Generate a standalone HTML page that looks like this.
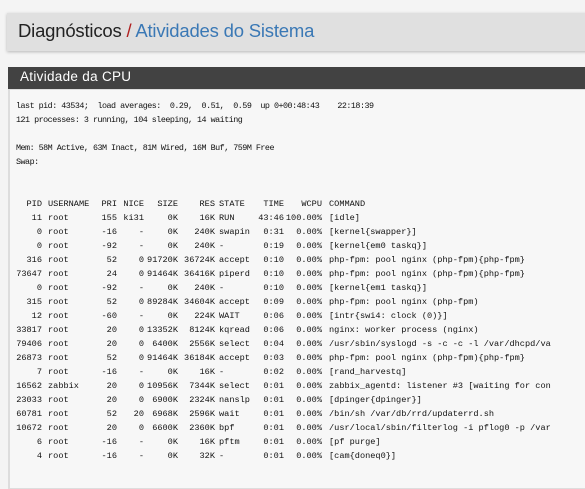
<!DOCTYPE html>
<html><head><meta charset="utf-8">
<style>
*{margin:0;padding:0;box-sizing:border-box}
body{width:585px;height:480px;overflow:hidden;background:#f4f4f4;font-family:"Liberation Sans",sans-serif;position:relative}
.hdr{position:absolute;left:7px;top:13px;width:590px;height:38px;background:#e0e0e0;box-shadow:0 1px 3px rgba(0,0,0,.25)}
.hdr h1{position:absolute;left:11px;top:7px;font-weight:normal;font-size:18.5px;color:#222;letter-spacing:-0.2px;white-space:nowrap}
.hdr .sl{color:#b02020}
.hdr .bl{color:#3a78b5}
.ph{position:absolute;left:8px;top:67px;width:590px;height:22px;background:#424242;color:#fff;font-size:13.5px;padding:2px 0 0 12px;letter-spacing:0.3px}
.pb{position:absolute;left:8px;top:89px;width:590px;height:400px;background:#f7f7f7;border:1px solid #ddd;border-left:2px solid #ddd}
.t{position:absolute;font-family:"Liberation Mono",monospace;font-size:8.4px;color:#111;white-space:pre;line-height:14px;letter-spacing:-0.5px}
.r{position:absolute;left:0;width:585px;height:14px;font-family:"Liberation Mono",monospace;font-size:8.6px;color:#111;white-space:pre;line-height:14px}
.r span{position:absolute;top:0}
.a{right:543px}.b{left:48px}.c{right:468px}.d{right:441px}.e{right:407px}.f{right:370px}.g{left:219px}.h{right:301px}.i{right:263px}.j{left:329px}
</style></head><body>
<div class="hdr"><h1>Diagnósticos <span class="sl">/</span> <span class="bl">Atividades do Sistema</span></h1></div>
<div class="ph">Atividade da CPU</div>
<div class="pb"></div>
<div class="t" style="left:16px;top:99px">last pid: 43534;  load averages:  0.29,  0.51,  0.59  up 0+00:48:43    22:18:39
121 processes: 3 running, 104 sleeping, 14 waiting

Mem: 58M Active, 63M Inact, 81M Wired, 16M Buf, 759M Free
Swap:</div>
<div class="r" style="top:197px"><span class="a">PID</span><span class="b">USERNAME</span><span class="c">PRI</span><span class="d">NICE</span><span class="e">SIZE</span><span class="f">RES</span><span class="g">STATE</span><span class="h">TIME</span><span class="i">WCPU</span><span class="j">COMMAND</span></div>
<div class="r" style="top:211px"><span class="a">11</span><span class="b">root</span><span class="c">155</span><span class="d">ki31</span><span class="e">0K</span><span class="f">16K</span><span class="g">RUN</span><span class="h">43:46</span><span class="i">100.00%</span><span class="j">[idle]</span></div>
<div class="r" style="top:225px"><span class="a">0</span><span class="b">root</span><span class="c">-16</span><span class="d">-</span><span class="e">0K</span><span class="f">240K</span><span class="g">swapin</span><span class="h">0:31</span><span class="i">0.00%</span><span class="j">[kernel{swapper}]</span></div>
<div class="r" style="top:239px"><span class="a">0</span><span class="b">root</span><span class="c">-92</span><span class="d">-</span><span class="e">0K</span><span class="f">240K</span><span class="g">-</span><span class="h">0:19</span><span class="i">0.00%</span><span class="j">[kernel{em0 taskq}]</span></div>
<div class="r" style="top:253px"><span class="a">316</span><span class="b">root</span><span class="c">52</span><span class="d">0</span><span class="e">91720K</span><span class="f">36724K</span><span class="g">accept</span><span class="h">0:10</span><span class="i">0.00%</span><span class="j">php-fpm: pool nginx (php-fpm){php-fpm}</span></div>
<div class="r" style="top:267px"><span class="a">73647</span><span class="b">root</span><span class="c">24</span><span class="d">0</span><span class="e">91464K</span><span class="f">36416K</span><span class="g">piperd</span><span class="h">0:10</span><span class="i">0.00%</span><span class="j">php-fpm: pool nginx (php-fpm){php-fpm}</span></div>
<div class="r" style="top:281px"><span class="a">0</span><span class="b">root</span><span class="c">-92</span><span class="d">-</span><span class="e">0K</span><span class="f">240K</span><span class="g">-</span><span class="h">0:10</span><span class="i">0.00%</span><span class="j">[kernel{em1 taskq}]</span></div>
<div class="r" style="top:295px"><span class="a">315</span><span class="b">root</span><span class="c">52</span><span class="d">0</span><span class="e">89284K</span><span class="f">34604K</span><span class="g">accept</span><span class="h">0:09</span><span class="i">0.00%</span><span class="j">php-fpm: pool nginx (php-fpm)</span></div>
<div class="r" style="top:309px"><span class="a">12</span><span class="b">root</span><span class="c">-60</span><span class="d">-</span><span class="e">0K</span><span class="f">224K</span><span class="g">WAIT</span><span class="h">0:06</span><span class="i">0.00%</span><span class="j">[intr{swi4: clock (0)}]</span></div>
<div class="r" style="top:323px"><span class="a">33817</span><span class="b">root</span><span class="c">20</span><span class="d">0</span><span class="e">13352K</span><span class="f">8124K</span><span class="g">kqread</span><span class="h">0:06</span><span class="i">0.00%</span><span class="j">nginx: worker process (nginx)</span></div>
<div class="r" style="top:337px"><span class="a">79406</span><span class="b">root</span><span class="c">20</span><span class="d">0</span><span class="e">6400K</span><span class="f">2556K</span><span class="g">select</span><span class="h">0:04</span><span class="i">0.00%</span><span class="j">/usr/sbin/syslogd -s -c -c -l /var/dhcpd/va</span></div>
<div class="r" style="top:351px"><span class="a">26873</span><span class="b">root</span><span class="c">52</span><span class="d">0</span><span class="e">91464K</span><span class="f">36184K</span><span class="g">accept</span><span class="h">0:03</span><span class="i">0.00%</span><span class="j">php-fpm: pool nginx (php-fpm){php-fpm}</span></div>
<div class="r" style="top:365px"><span class="a">7</span><span class="b">root</span><span class="c">-16</span><span class="d">-</span><span class="e">0K</span><span class="f">16K</span><span class="g">-</span><span class="h">0:02</span><span class="i">0.00%</span><span class="j">[rand_harvestq]</span></div>
<div class="r" style="top:379px"><span class="a">16562</span><span class="b">zabbix</span><span class="c">20</span><span class="d">0</span><span class="e">10956K</span><span class="f">7344K</span><span class="g">select</span><span class="h">0:01</span><span class="i">0.00%</span><span class="j">zabbix_agentd: listener #3 [waiting for con</span></div>
<div class="r" style="top:393px"><span class="a">23033</span><span class="b">root</span><span class="c">20</span><span class="d">0</span><span class="e">6900K</span><span class="f">2324K</span><span class="g">nanslp</span><span class="h">0:01</span><span class="i">0.00%</span><span class="j">[dpinger{dpinger}]</span></div>
<div class="r" style="top:407px"><span class="a">60781</span><span class="b">root</span><span class="c">52</span><span class="d">20</span><span class="e">6968K</span><span class="f">2596K</span><span class="g">wait</span><span class="h">0:01</span><span class="i">0.00%</span><span class="j">/bin/sh /var/db/rrd/updaterrd.sh</span></div>
<div class="r" style="top:421px"><span class="a">10672</span><span class="b">root</span><span class="c">20</span><span class="d">0</span><span class="e">6600K</span><span class="f">2360K</span><span class="g">bpf</span><span class="h">0:01</span><span class="i">0.00%</span><span class="j">/usr/local/sbin/filterlog -i pflog0 -p /var</span></div>
<div class="r" style="top:435px"><span class="a">6</span><span class="b">root</span><span class="c">-16</span><span class="d">-</span><span class="e">0K</span><span class="f">16K</span><span class="g">pftm</span><span class="h">0:01</span><span class="i">0.00%</span><span class="j">[pf purge]</span></div>
<div class="r" style="top:449px"><span class="a">4</span><span class="b">root</span><span class="c">-16</span><span class="d">-</span><span class="e">0K</span><span class="f">32K</span><span class="g">-</span><span class="h">0:01</span><span class="i">0.00%</span><span class="j">[cam{doneq0}]</span></div>
</body></html>
